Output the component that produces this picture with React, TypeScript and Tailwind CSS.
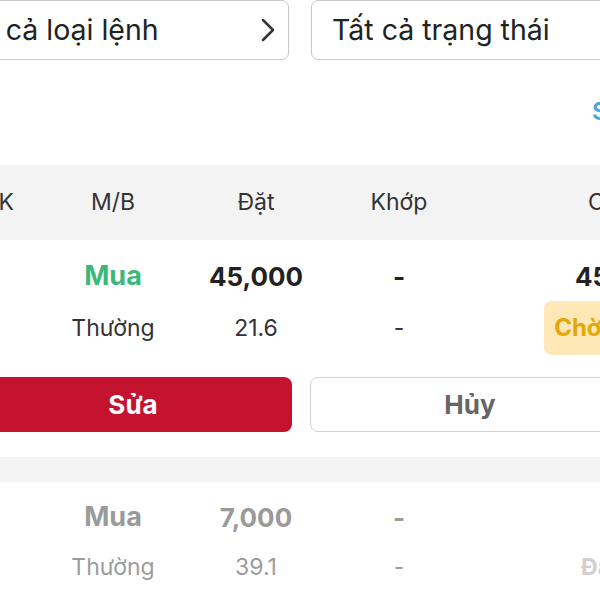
import { ChevronRight } from "lucide-react";

const cols = "grid grid-cols-[118px_142px_144px_142px_280px]";

function Cell({ children, className = "" }: { children?: React.ReactNode; className?: string }) {
  return (
    <div className={`flex items-center justify-center whitespace-nowrap ${className}`}>{children}</div>
  );
}

export default function App() {
  return (
    <div
      className="w-[600px] h-[600px] overflow-hidden bg-white text-[#222]"
      style={{ fontFamily: "Inter, 'Noto Sans', sans-serif" }}
    >
      {/* FILTERS */}
      <div className="ml-[-60px] w-[720px] flex gap-[22px]">
        <div className="w-[349px] h-[60px] border border-[#c9c9c9] rounded-[7px] flex items-center pl-[15px]">
          <span className="flex-1 text-[28.5px] whitespace-nowrap">Tất cả loại lệnh</span>
          <ChevronRight className="w-[40px] h-[40px] text-[#333]" strokeWidth={1.5} />
        </div>
        <div className="w-[349px] h-[60px] border border-[#c9c9c9] rounded-[7px] flex items-center pl-[20px]">
          <span className="text-[28.5px] whitespace-nowrap">Tất cả trạng thái</span>
        </div>
      </div>

      {/* LINK */}
      <div className="h-[105px] flex items-center pl-[592px] pb-[2px]">
        <span className="text-[24px] font-semibold text-[#47a6df] whitespace-nowrap">Sửa</span>
      </div>

      {/* HEADER */}
      <div className="h-[75px] bg-[#f3f3f3] overflow-hidden">
        <div className={`${cols} ml-[-76px] h-full text-[23px] text-[#333]`}>
          <Cell className="justify-end pr-[28px]">Mã CK</Cell>
          <Cell>M/B</Cell>
          <Cell>Đặt</Cell>
          <Cell>Khớp</Cell>
          <Cell>Còn</Cell>
        </div>
      </div>

      {/* ORDER 1 */}
      <div className="ml-[-76px] pt-[11px]">
        <div className={`${cols} h-[50px]`}>
          <Cell />
          <Cell className="text-[27px] font-bold text-[#3cb878]">Mua</Cell>
          <Cell className="text-[26px] font-bold">45,000</Cell>
          <Cell className="text-[26px] font-bold">-</Cell>
          <Cell className="text-[26px] font-bold pl-[24px]">45,000</Cell>
        </div>
        <div className={`${cols} h-[50px] text-[23px] text-[#333]`}>
          <Cell />
          <Cell>Thường</Cell>
          <Cell>21.6</Cell>
          <Cell>-</Cell>
          <Cell>
            <span className="h-[54px] px-[10px] flex items-center rounded-[8px] bg-[#fde8b6] text-[#e6a608] text-[24px] font-bold">
              Chờ khớp
            </span>
          </Cell>
        </div>
      </div>

      {/* ACTIONS */}
      <div className="ml-[-26px] w-[656px] mt-[26px] flex gap-[18px]">
        <button className="flex-1 h-[55px] rounded-[8px] bg-[#c4122f] text-white text-[26px] font-bold">
          Sửa
        </button>
        <button className="flex-1 h-[55px] rounded-[8px] border-[1.5px] border-[#d2d2d2] text-[#666] text-[26px] font-bold">
          Hủy
        </button>
      </div>

      <div className="mt-[25px] h-[25px] bg-[#f4f4f4]" />

      {/* ORDER 2 */}
      <div className="ml-[-76px] pt-[10px]">
        <div className={`${cols} h-[50px] text-[#9a9a9a]`}>
          <Cell />
          <Cell className="text-[27px] font-bold">Mua</Cell>
          <Cell className="text-[26px] font-bold">7,000</Cell>
          <Cell className="text-[26px] font-bold">-</Cell>
          <Cell />
        </div>
        <div className={`${cols} h-[50px] text-[23px] text-[#9c9c9c]`}>
          <Cell />
          <Cell>Thường</Cell>
          <Cell>39.1</Cell>
          <Cell>-</Cell>
          <Cell className="font-bold text-[#d0d0d0] pl-[20px]">Đã hủy</Cell>
        </div>
      </div>
    </div>
  );
}
